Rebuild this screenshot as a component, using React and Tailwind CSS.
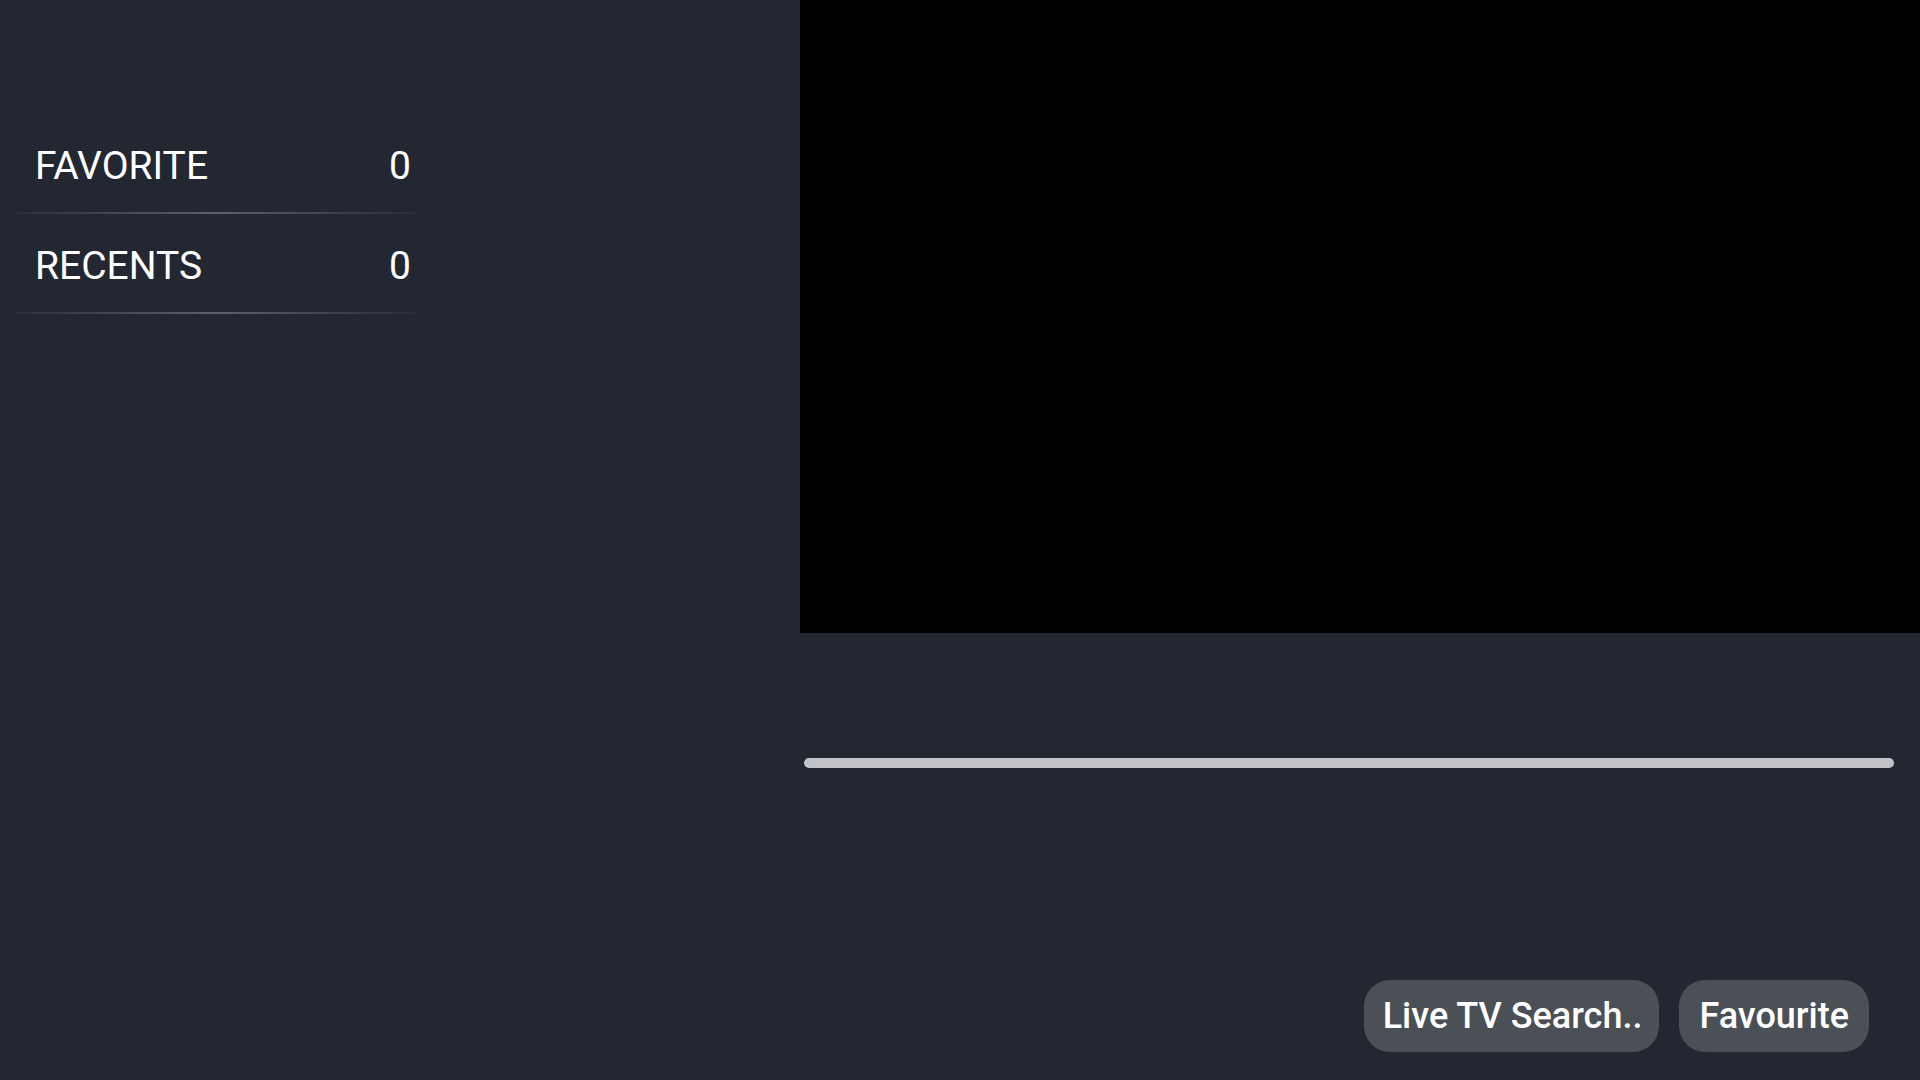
export default function App() {
  const rows = [
    { label: "FAVORITE", count: 0 },
    { label: "RECENTS", count: 0 },
  ];
  return (
    <div className="w-[1920px] h-[1080px] bg-[#232732] flex overflow-hidden" style={{ fontFamily: "Roboto, 'Noto Sans', sans-serif" }}>
      <div className="w-[800px] h-full pt-[114px] pl-[17px]">
        <div className="w-[398px] flex flex-col">
          {rows.map((r) => (
            <div key={r.label} className="h-[100px] flex flex-col">
              <div className="flex-1 flex items-center justify-between pt-[6px] pl-[18px] pr-[4px] text-[39px] text-white leading-none">
                <span>{r.label}</span>
                <span>{r.count}</span>
              </div>
              <div className="h-[2px] bg-gradient-to-r from-[#2b303b] via-[#5c616d] to-[#2a2e39]" />
            </div>
          ))}
        </div>
      </div>
      <div className="flex-1 h-full flex flex-col">
        <div className="h-[633px] bg-black" />
        <div className="pt-[125px] pl-[4px] pr-[26px]">
          <div className="h-[10px] rounded-full bg-[#c2c3c8]" />
        </div>
        <div className="flex-1 flex items-end justify-end gap-[20px] pr-[51px] pb-[28px]">
          <div className="h-[72px] pl-[19px] pr-[17px] rounded-[26px] bg-[#4b4f56] text-white text-[36px] font-medium flex items-center">Live TV Search..</div>
          <div className="h-[72px] px-[20px] rounded-[26px] bg-[#4b4f56] text-white text-[36px] font-medium flex items-center">Favourite</div>
        </div>
      </div>
    </div>
  );
}
